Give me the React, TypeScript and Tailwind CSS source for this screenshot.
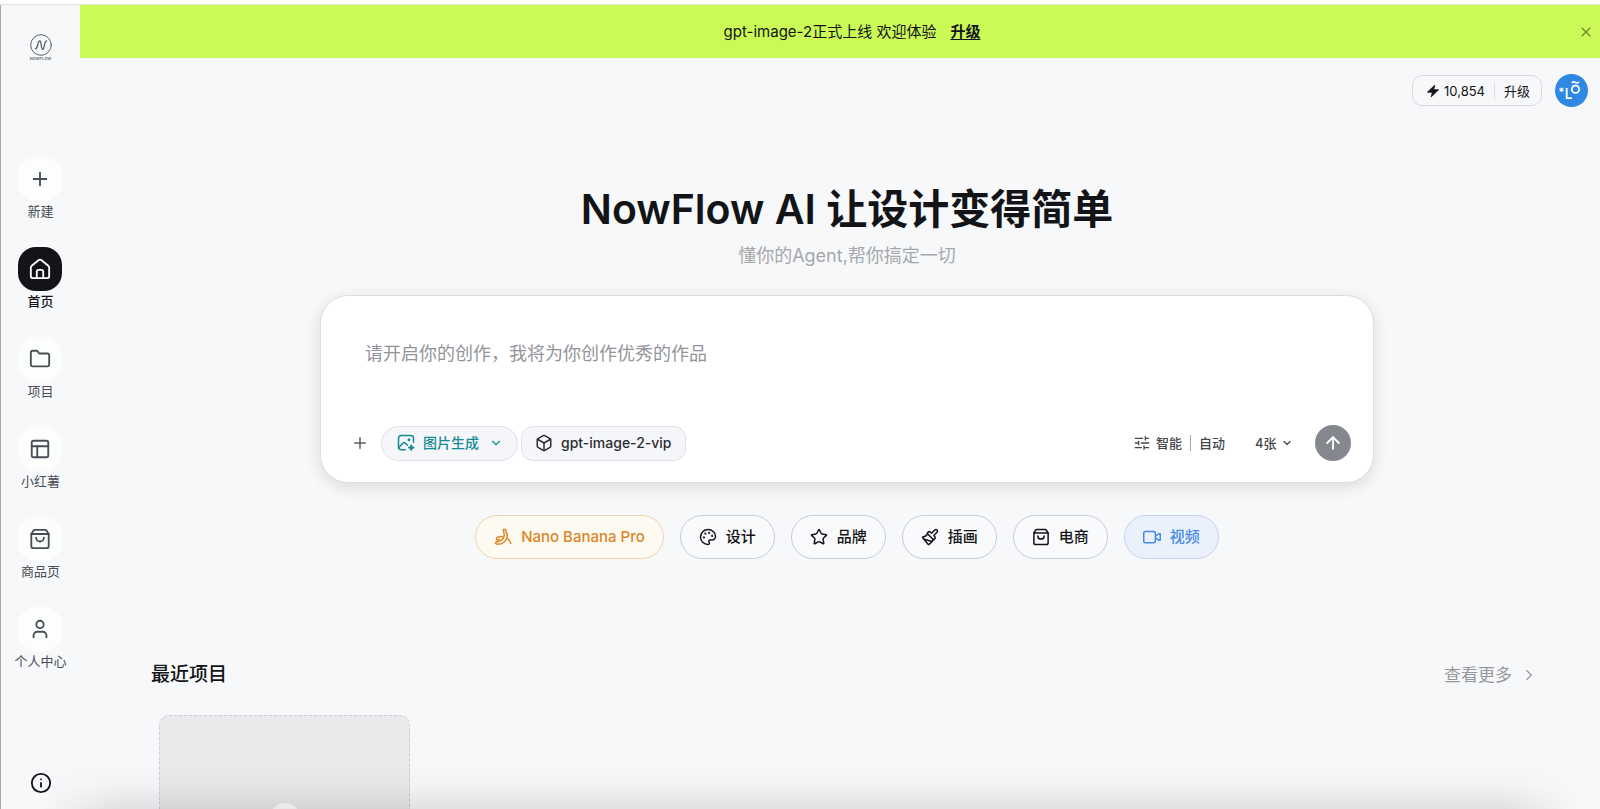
import { useState } from 'react';
import {
  ArrowUp,
  Box,
  ChevronDown,
  ChevronRight,
  Folder,
  Info,
  Paintbrush,
  Palette,
  PanelsTopLeft,
  Plus,
  Star,
  User,
  X,
} from 'lucide-react';

type IconProps = { className?: string; strokeWidth?: number };

function HomeIcon({ className, strokeWidth = 2 }: IconProps) {
  return (
    <svg viewBox="0 0 24 24" className={className} fill="none" stroke="currentColor" strokeWidth={strokeWidth} strokeLinecap="round" strokeLinejoin="round">
      <path d="M2 10.500a2.500 2.500 0 0 1 1-2l7.300-6a2.700 2.700 0 0 1 3.400 0l7.300 6a2.500 2.500 0 0 1 1 2V19.500a2.500 2.500 0 0 1-2.500 2.500h-15A2.500 2.500 0 0 1 2 19.500z" />
      <path d="M8.500 22v-7a2 2 0 0 1 2-2h3a2 2 0 0 1 2 2v7" />
    </svg>
  );
}

function BagIcon({ className, strokeWidth = 2 }: IconProps) {
  return (
    <svg viewBox="0 0 24 24" className={className} fill="none" stroke="currentColor" strokeWidth={strokeWidth} strokeLinecap="round" strokeLinejoin="round">
      <path d="M2.500 6.500v13A2.500 2.500 0 0 0 5 22h14a2.500 2.500 0 0 0 2.500-2.500v-13" />
      <path d="M2.500 6.500 5 2.700A1.600 1.600 0 0 1 6.300 2h11.400a1.600 1.600 0 0 1 1.300.7l2.500 3.800z" />
      <path d="M7.800 10.500a4.200 4.200 0 0 0 8.400 0" />
    </svg>
  );
}

const navItems = [
  { label: '新建', icon: Plus },
  { label: '首页', icon: HomeIcon },
  { label: '项目', icon: Folder },
  { label: '小红薯', icon: PanelsTopLeft },
  { label: '商品页', icon: BagIcon },
  { label: '个人中心', icon: User },
];

const categories = [
  { label: '设计', icon: Palette },
  { label: '品牌', icon: Star },
  { label: '插画', icon: Paintbrush },
  { label: '电商', icon: BagIcon },
];

function Logo() {
  return (
    <a href="#" aria-label="NowFlow" className="flex flex-col items-center text-[#4f5257]">
      <svg viewBox="0 0 24 24" className="h-6 w-6" fill="none" stroke="currentColor" strokeLinecap="round">
        <circle cx="12" cy="12" r="10.3" strokeWidth="0.9" />
        <path d="M6.400 15.800c1.600-.2 1.900-2.400 2.500-4.700.5-2 1-3.400 1.900-3.300 1.900.2 1 8.600 2.900 8.700 1.600.1 1.400-8.200 3.900-8.600" strokeWidth="1.200" />
      </svg>
      <span className="text-[4px] leading-[4px] font-medium">NOWFLOW</span>
    </a>
  );
}

function BoltIcon() {
  return (
    <svg viewBox="0 0 24 24" className="h-3.5 w-3.5" fill="currentColor" stroke="currentColor" strokeWidth="1.500" strokeLinejoin="round">
      <path d="M15 2 2.500 14H11l-2 8L21.500 10H13z" />
    </svg>
  );
}

function ImageSparkIcon() {
  return (
    <svg viewBox="0 0 24 24" className="h-[18px] w-[18px]" fill="none" stroke="currentColor" strokeWidth="2" strokeLinecap="round" strokeLinejoin="round">
      <path d="M11 21H6a4 4 0 0 1-4-4V6a4 4 0 0 1 4-4h12a4 4 0 0 1 4 4v5" />
      <path d="m2.500 18 5.500-6c1-1.100 2-1.100 3 0l3 3" />
      <circle cx="16" cy="7.500" r="1" fill="currentColor" />
      <path d="M19 14.500c.4 2.500 1.200 3.300 3.700 3.700-2.500.4-3.300 1.200-3.700 3.700-.4-2.500-1.200-3.300-3.700-3.700 2.500-.4 3.300-1.200 3.700-3.700z" fill="currentColor" strokeWidth="1.500" />
    </svg>
  );
}

function SlidersIcon() {
  return (
    <svg viewBox="0 0 24 24" className="h-4 w-4" fill="none" stroke="currentColor" strokeWidth="2" strokeLinecap="round">
      <path d="M2 5h11M17 5h5M17 2.500v5M2 12h5M11 12h11M7 9.500v5M2 19h9M15 19h7M15 16.500v5" />
    </svg>
  );
}

function BananaIcon() {
  return (
    <svg viewBox="0 0 24 24" className="h-[18px] w-[18px]" fill="none" stroke="currentColor" strokeWidth="2" strokeLinecap="round" strokeLinejoin="round">
      <path d="M12.500 2h3l.5 3c2.500 4 2.300 8-.5 11.500-2.200 3.300-6 5.200-10.500 5-2.200-.1-3.500-1-3-2.200.3-.8 1.500-.9 3-1.100 4.500-.7 7.500-3 8.500-7 .5-2.300.2-4-.7-6z" />
      <path d="M12.200 12c-2.500-1-5.500-.7-7.500.6-1.500 1-2 2.500-1 3.200 1 .6 2-.3 3.500-.6" />
      <path d="M17 13.500c2.500 1.500 4.500 3.800 5.500 7" />
    </svg>
  );
}

function VideoIcon() {
  return (
    <svg viewBox="0 0 24 24" className="h-[18px] w-[18px]" fill="none" stroke="currentColor" strokeWidth="2" strokeLinecap="round" strokeLinejoin="round">
      <rect x="1" y="4.500" width="15.500" height="15" rx="2" />
      <path d="M17 10.500 21.500 7.500c.7-.4 1.500-.1 1.500.7v7.600c0 .8-.8 1.100-1.500.7L17 13.500" />
    </svg>
  );
}

function Avatar() {
  return (
    <button aria-label="账户" className="flex h-[33px] w-[33px] items-center justify-center rounded-full bg-[#2f88e2] text-white">
      <svg viewBox="0 0 33 33" className="h-full w-full" fill="none" stroke="currentColor" strokeWidth="1.800">
        <path d="M6.500 13.500v4.500M4.500 14.600l4 2.300M8.500 14.600l-4 2.300" strokeWidth="1.100" />
        <path d="M11.700 14v10.200h5.300" />
        <circle cx="20.500" cy="15.200" r="3.700" />
        <path d="M16.800 9c1.200-1.600 2.400-1.300 3.600-.6 1.200.7 2.400.8 3.500-.7" strokeWidth="1.500" />
      </svg>
    </button>
  );
}

function Sidebar() {
  const [active, setActive] = useState('首页');

  return (
    <aside className="flex w-20 shrink-0 flex-col items-center border-l border-[#a5a5a8] pt-7 pb-[15px]">
      <Logo />
      <nav className="mt-24 flex flex-col gap-[26px]">
        {navItems.map(({ label, icon: Icon }) => (
          <button key={label} onClick={() => setActive(label)} className="flex flex-col items-center">
            <span
              className={
                active === label
                  ? 'flex h-11 w-11 items-center justify-center rounded-[18px] bg-[#121417] text-white'
                  : 'flex h-11 w-11 items-center justify-center rounded-[18px] bg-[#fcfdfd] text-[#4a4d54]'
              }
            >
              <Icon className="h-[22px] w-[22px]" strokeWidth={2} />
            </span>
            <span
              className={
                active === label
                  ? 'text-[13px] leading-5 font-medium text-[#121417]'
                  : 'text-[13px] leading-5 text-[#4a4d54]'
              }
            >
              {label}
            </span>
          </button>
        ))}
      </nav>
      <button aria-label="帮助" className="mt-auto text-[#121417]">
        <Info className="h-[22px] w-[22px]" strokeWidth={2} />
      </button>
    </aside>
  );
}

function PromptBox() {
  const [prompt, setPrompt] = useState('');

  return (
    <form
      onSubmit={(e) => e.preventDefault()}
      className="flex w-full max-w-[1054px] flex-col rounded-[28px] border border-[#dcdee0] bg-white px-[22px] pt-11 pb-[21px] shadow-[0_4px_16px_rgba(0,0,0,0.12)]"
    >
      <textarea
        aria-label="创作描述"
        rows={2}
        value={prompt}
        onChange={(e) => setPrompt(e.target.value)}
        placeholder="请开启你的创作，我将为你创作优秀的作品"
        className="h-[85px] resize-none px-[22px] text-lg leading-7 text-[#121417] outline-none placeholder:text-[#929499]"
      />
      <div className="flex items-center">
        <button type="button" aria-label="添加" className="mr-3 ml-2 text-[#5a5c63]">
          <Plus className="h-[18px] w-[18px]" strokeWidth={2} />
        </button>
        <label className="relative flex h-[35px] items-center rounded-full border border-[#dfe1e6] bg-[#f5f6f9] pl-[15px] text-[#168a94]">
          <ImageSparkIcon />
          <select aria-label="生成类型" className="appearance-none pr-[38px] pl-2 text-[14px] leading-5 font-medium outline-none">
            <option>图片生成</option>
            <option>视频生成</option>
          </select>
          <ChevronDown className="pointer-events-none absolute right-3.5 h-3.5 w-3.5" />
        </label>
        <button type="button" className="ml-[3px] flex h-[35px] items-center gap-2 rounded-xl border border-[#dfe1e6] bg-[#f5f6f9] px-[13px] text-[14px] leading-5 font-medium text-[#2b2d32]">
          <Box className="h-[18px] w-[18px]" />
          gpt-image-2-vip
        </button>

        <button type="button" className="ml-auto flex items-center gap-1.5 text-[13px] leading-5 font-medium text-[#45474d]">
          <SlidersIcon />
          智能
          <span className="mx-0.5 h-4 w-px bg-[#a5a7ac]" />
          自动
        </button>
        <label className="relative ml-[30px] flex items-center text-[#45474d]">
          <select aria-label="生成数量" defaultValue="4张" className="appearance-none pr-4 text-[13px] leading-5 font-medium outline-none">
            <option>1张</option>
            <option>2张</option>
            <option>4张</option>
          </select>
          <ChevronDown className="pointer-events-none absolute right-0 h-3 w-3" strokeWidth={2.4} />
        </label>
        <button type="submit" aria-label="发送" className="ml-[22px] flex h-9 w-9 items-center justify-center rounded-full bg-[#85878f] text-white">
          <ArrowUp className="h-5 w-5" strokeWidth={2.2} />
        </button>
      </div>
    </form>
  );
}

export default function App() {
  const [showBanner, setShowBanner] = useState(true);

  return (
    <div className="relative flex h-screen flex-col overflow-hidden bg-[#f6f8fa] font-['Inter','Noto_Sans_CJK_SC',sans-serif] text-[#121417]">
      <div className="h-[5px] shrink-0 border-b border-[#e2e4e4] bg-white" />
      <div className="flex min-h-0 flex-1">
        <Sidebar />
        <main className="min-w-0 flex-1">
          {/* Announcement */}
          {showBanner && (
            <div className="relative flex h-[53px] items-center justify-center gap-3.5 bg-[#cbfa57] pl-6 text-[15px] leading-6">
              <p>gpt-image-2正式上线 欢迎体验</p>
              <a href="#" className="font-semibold underline underline-offset-2">升级</a>
              <button aria-label="关闭" onClick={() => setShowBanner(false)} className="absolute right-1.5 text-[#70852f]">
                <X className="h-4 w-4" strokeWidth={1.8} />
              </button>
            </div>
          )}

          {/* Account bar */}
          <header className="flex items-center justify-end gap-[13px] pt-4 pr-3">
            <div className="flex h-[31px] items-center rounded-[10px] border border-[#d9dbdf] px-[11px] text-[13px] leading-5">
              <span className="flex items-center gap-1 pl-0.5">
                <BoltIcon />
                10,854
              </span>
              <span className="mx-[9px] h-4 w-px bg-[#dddfe3]" />
              <button>升级</button>
            </div>
            <Avatar />
          </header>

          {/* Hero */}
          <section className="flex flex-col items-center px-4 pt-[72px] pl-[30px]">
            <h1 className="text-[41px] leading-[60px] font-semibold">NowFlow AI 让设计变得简单</h1>
            <p className="mt-1 mb-[26px] text-lg leading-[26px] text-[#a6a8ab]">懂你的Agent,帮你搞定一切</p>
            <PromptBox />
            <div className="mt-8 flex gap-4 text-[15px] leading-6 font-medium">
              <button className="flex h-11 items-center gap-[9px] rounded-full border border-[#f3d3ae] bg-[#fcfaf1] px-[18px] text-[#de8529]">
                <BananaIcon />
                Nano Banana Pro
              </button>
              {categories.map(({ label, icon: Icon }) => (
                <button key={label} className="flex h-11 items-center gap-[9px] rounded-full border border-[#c9ccd1] bg-[#f9fafb] px-[18px]">
                  <Icon className="h-[18px] w-[18px]" />
                  {label}
                </button>
              ))}
              <button className="flex h-11 items-center gap-[9px] rounded-full border border-[#c5d2f5] bg-[#ebf1fb] px-[18px] text-[#468ae6]">
                <VideoIcon />
                视频
              </button>
            </div>
          </section>

          {/* Recent projects */}
          <section className="mt-[100px] pr-[62px] pl-[71px]">
            <div className="flex items-center justify-between">
              <h2 className="text-[19px] leading-8 font-medium">最近项目</h2>
              <a href="#" className="flex items-center gap-2 text-[17px] leading-8 text-[#96989c]">
                查看更多
                <ChevronRight className="h-[18px] w-[18px]" strokeWidth={1.6} />
              </a>
            </div>
            <div className="mt-6 grid grid-cols-[repeat(auto-fill,251px)] gap-6 px-2">
              <button aria-label="新建项目" className="flex h-52 items-center justify-center rounded-[10px] border border-dashed border-[#cdcfd2] bg-[#e9eaec]">
                <span className="flex h-8 w-8 items-center justify-center rounded-full bg-white text-[#85878f]">
                  <Plus className="h-4 w-4" />
                </span>
              </button>
            </div>
          </section>
        </main>
      </div>
      {/* Soft shade along the bottom edge */}
      <div className="pointer-events-none absolute right-5 bottom-0 left-10 h-12 bg-linear-to-t from-black/9 via-black/2 to-transparent mask-x-from-95% mask-x-to-100%" />
    </div>
  );
}
